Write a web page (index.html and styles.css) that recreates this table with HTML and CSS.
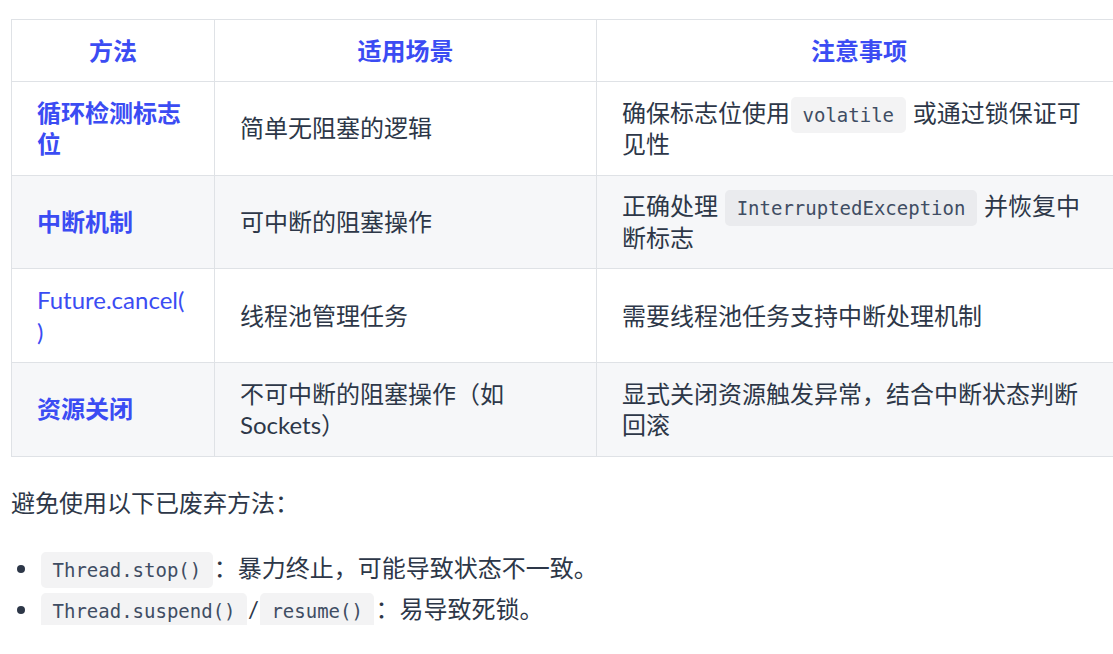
FILE: index.html
```html
<!DOCTYPE html>
<html lang="zh-CN">
<head>
<meta charset="utf-8">
<title>线程终止方法</title>
<link rel="stylesheet" href="styles.css">
</head>
<body>
<main class="doc">
  <table class="cmp">
    <colgroup>
      <col class="c1">
      <col class="c2">
      <col class="c3">
    </colgroup>
    <thead>
      <tr><th>方法</th><th>适用场景</th><th>注意事项</th></tr>
    </thead>
    <tbody>
      <tr>
        <td class="name">循环检测标志位</td>
        <td>简单无阻塞的逻辑</td>
        <td>确保标志位使用<code>volatile</code> 或通过锁保证可见性</td>
      </tr>
      <tr>
        <td class="name">中断机制</td>
        <td>可中断的阻塞操作</td>
        <td>正确处理 <code>InterruptedException</code> 并恢复中断标志</td>
      </tr>
      <tr>
        <td class="name plain">Future.cancel()</td>
        <td>线程池管理任务</td>
        <td>需要线程池任务支持中断处理机制</td>
      </tr>
      <tr>
        <td class="name">资源关闭</td>
        <td>不可中断的阻塞操作（如Sockets）</td>
        <td>显式关闭资源触发异常，结合中断状态判断回滚</td>
      </tr>
    </tbody>
  </table>
  <p class="lead">避免使用以下已废弃方法：</p>
  <ul class="bullets">
    <li><code>Thread.stop()</code>：暴力终止，可能导致状态不一致。</li>
    <li><code>Thread.suspend()</code>/<code>resume()</code>：易导致死锁。</li>
  </ul>
</main>
</body>
</html>
```
FILE: styles.css
```css
html, body {
  margin: 0;
  padding: 0;
  background: #ffffff;
}

body {
  color: #2d3748;
  font-family: Lato, "Noto Sans CJK SC", sans-serif;
  font-size: 24px;
  line-height: 31.75px;
  overflow: hidden;
}

.doc {
  padding: 19px 0 0 11px;
}

.cmp {
  border-collapse: collapse;
  table-layout: fixed;
  width: 1110px;
}

.cmp .c1 { width: 203px; }
.cmp .c2 { width: 382px; }
.cmp .c3 { width: 525px; }

.cmp th,
.cmp td {
  border: 1px solid #dfe2e6;
  padding: 14.6px 25px;
  vertical-align: middle;
  text-align: left;
  overflow-wrap: anywhere;
}

.cmp td:last-child {
  padding-right: 34px;
}

.cmp th {
  color: #3b4cf3;
  font-weight: 700;
  text-align: center;
}

.cmp tbody tr:nth-child(even) {
  background: #f6f7f9;
}

.cmp .name {
  color: #3b4cf3;
  font-weight: 700;
}

.cmp .name.plain {
  font-weight: 400;
}

code {
  font-family: "DejaVu Sans Mono", "Liberation Mono", monospace;
  font-size: 19px;
  line-height: normal;
  color: #3f4d63;
  background: rgba(30, 40, 60, 0.055);
  padding: 7px 11.5px;
  margin: 0 1px;
  border-radius: 5px;
}

.lead {
  margin: 30px 0 0;
}

.bullets {
  margin: 34px 0 0;
  padding-left: 29px;
}

.bullets li + li {
  margin-top: 9px;
}

.bullets li::marker {
  color: #2d3748;
}
```
